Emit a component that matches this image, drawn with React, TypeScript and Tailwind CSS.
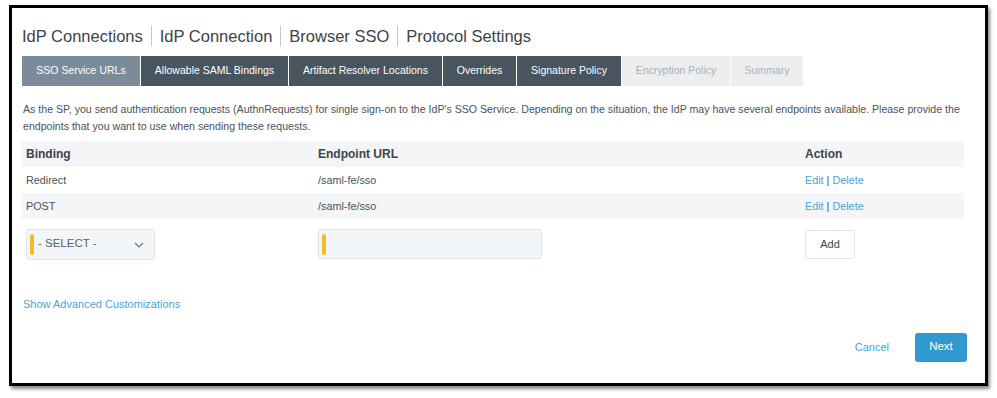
import React from 'react';

const tabs = [
  { label: 'SSO Service URLs', w: 'w-[118px]', cls: 'bg-[#7b8b9a] text-white' },
  { label: 'Allowable SAML Bindings', w: 'w-[147px]', cls: 'bg-[#485560] text-white' },
  { label: 'Artifact Resolver Locations', w: 'w-[153px]', cls: 'bg-[#485560] text-white' },
  { label: 'Overrides', w: 'w-[73px]', cls: 'bg-[#485560] text-white' },
  { label: 'Signature Policy', w: 'w-[104px]', cls: 'bg-[#485560] text-white' },
  { label: 'Encryption Policy', w: 'w-[108px]', cls: 'bg-[#eceef0] text-[#aab0b6]' },
  { label: 'Summary', w: 'w-[72px]', cls: 'bg-[#eceef0] text-[#aab0b6]' },
];

const crumbs = ['IdP Connections', 'IdP Connection', 'Browser SSO', 'Protocol Settings'];

export default function App() {
  return (
    <div className="w-[997px] h-[398px] bg-white pt-[5px] pl-[9px] font-['Liberation_Sans',Arial,sans-serif]">
      <div className="w-[979px] h-[381px] border-[3px] border-black bg-white shadow-[2px_3px_3px_rgba(0,0,0,0.45)] flex flex-col px-[10px]">
        {/* Breadcrumb title */}
        <div className="flex items-center mt-[16px] h-[24px] text-[16.5px] text-[#3d4349]">
          {crumbs.map((c, i) => (
            <React.Fragment key={c}>
              {i > 0 && <span className="mx-[8px] w-px h-[20px] bg-[#c4c8cc]" />}
              <span>{c}</span>
            </React.Fragment>
          ))}
        </div>

        {/* Wizard tabs */}
        <div className="flex gap-[1px] mt-[8px] h-[30px]">
          {tabs.map((t) => (
            <div key={t.label} className={`${t.w} ${t.cls} flex items-center justify-center text-[10.5px]`}>
              {t.label}
            </div>
          ))}
        </div>

        {/* Description */}
        <p className="mt-[15px] pl-px text-[10.6px] leading-[17px] text-[#4c5258]">
          As the SP, you send authentication requests (AuthnRequests) for single sign-on to the IdP's SSO Service. Depending on the situation, the IdP may have several endpoints available. Please provide the endpoints that you want to use when sending these requests.
        </p>

        {/* Endpoints table */}
        <div className="mt-[6px] w-[942px] text-[10.8px] text-[#4c5258]">
          <div className="flex items-center h-[26px] bg-[#f3f5f7] font-bold text-[12px] text-[#3d4349]">
            <div className="w-[296px] pl-[4px]">Binding</div>
            <div className="w-[487px]">Endpoint URL</div>
            <div>Action</div>
          </div>
          {[
            { b: 'Redirect', bg: 'bg-white' },
            { b: 'POST', bg: 'bg-[#f3f5f7]' },
          ].map((r) => (
            <div key={r.b} className={`flex items-center h-[26px] ${r.bg}`}>
              <div className="w-[296px] pl-[4px]">{r.b}</div>
              <div className="w-[487px]">/saml-fe/sso</div>
              <div className="text-[#4aa3d8]">
                Edit <span className="text-[#4c5258]">|</span> Delete
              </div>
            </div>
          ))}

          {/* New entry row */}
          <div className="flex items-center h-[42px] mt-[4px]">
            <div className="w-[296px] pl-[4px]">
              <div className="w-[129px] h-[31px] bg-[#f2f6f9] border border-[#dfe4e8] rounded-[3px] flex items-center pl-[3px] pr-[10px]">
                <span className="w-[4px] h-[21px] rounded-full bg-[#f5bd1f]" />
                <span className="ml-[4px] flex-1 text-[11.5px] text-[#5a6168]">- SELECT -</span>
                <svg width="10" height="6" viewBox="0 0 10 6" className="mt-[2px]">
                  <path d="M1 1l4 4 4-4" fill="none" stroke="#6b7279" strokeWidth="1.2" />
                </svg>
              </div>
            </div>
            <div className="w-[487px]">
              <div className="w-[224px] h-[30px] bg-[#f2f6f9] border border-[#dfe4e8] rounded-[3px] flex items-center pl-[3px]">
                <span className="w-[4px] h-[21px] rounded-full bg-[#f5bd1f]" />
              </div>
            </div>
            <div className="w-[50px] h-[29px] border border-[#e0e3e6] rounded-[3px] flex items-center justify-center text-[11px] text-[#3d4349]">
              Add
            </div>
          </div>
        </div>

        <div className="mt-[31px] pl-px text-[11px] text-[#4aa3d8]">Show Advanced Customizations</div>

        {/* Footer buttons */}
        <div className="flex items-center justify-end mt-[20px] w-[945px]">
          <span className="text-[11px] text-[#4aa3d8] mr-[26px]">Cancel</span>
          <div className="w-[52px] h-[29px] bg-[#2f99d0] rounded-[3px] flex items-center justify-center text-[11.5px] text-white">
            Next
          </div>
        </div>
      </div>
    </div>
  );
}
